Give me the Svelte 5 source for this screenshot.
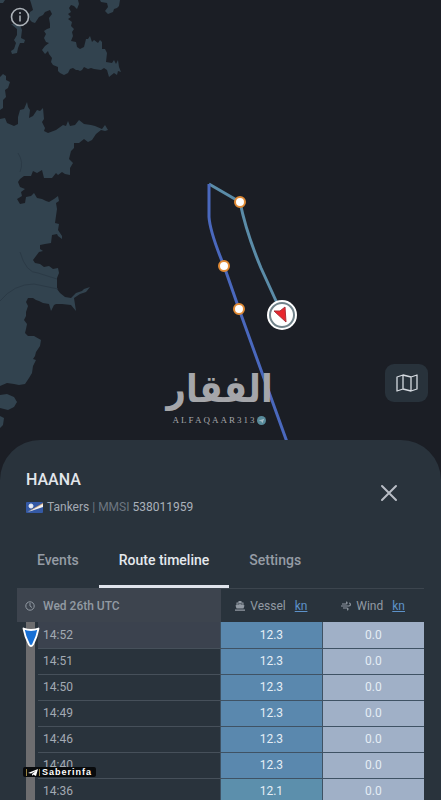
<script lang="ts">
	interface TrackRow {
		time: string;
		vessel: string;
		wind: string;
	}

	const rows: TrackRow[] = [
		{ time: '14:52', vessel: '12.3', wind: '0.0' },
		{ time: '14:51', vessel: '12.3', wind: '0.0' },
		{ time: '14:50', vessel: '12.3', wind: '0.0' },
		{ time: '14:49', vessel: '12.3', wind: '0.0' },
		{ time: '14:46', vessel: '12.3', wind: '0.0' },
		{ time: '14:40', vessel: '12.3', wind: '0.0' },
		{ time: '14:36', vessel: '12.1', wind: '0.0' }
	];

	const tabs = ['Events', 'Route timeline', 'Settings'];
	let activeTab = $state('Route timeline');
	let selected = $state(0);

	// Reported positions along the track
	const waypoints = [
		{ x: 240, y: 202 },
		{ x: 224, y: 266 },
		{ x: 239, y: 309 }
	];
</script>

<div class="app">
	<section class="map" aria-label="Map">
		<svg class="chart" viewBox="0 0 441 500" preserveAspectRatio="xMinYMin slice" aria-hidden="true">
			<g fill="#32434f">
				<path d="M30 0 78 0 79 4 77 9 74 6 71 5 69 8 71 12 68 14 71 17 68 19 72 22 71 26 74 29 72 32 73 36 71 41 76 42 77 47 80 49 84 47 86 39 88 39 90 36 92 42 94 40 98 43 100 40 102 42 102 49 105 49 107 53 106 62 112 63 114 60 116 64 118 60 119 67 121 72 118 71 117 75 114 73 109 77 107 70 104 68 101 70 94 69 91 68 88 69 84 67 82 70 80 71 78 70 76 70 73 68 70 69 68 73 64 75 60 73 58 71 58 67 53 65 51 62 52 58 49 54 48 51 45 54 42 50 45 46 49 43 46 42 44 38 46 34 44 31 47 29 50 28 50 24 49 18 52 14 50 10 45 12 43 15 39 17 37 20 35 23 32 22 30 20 29 15 30 12 33 10 31 3Z" />
				<path d="M11 24 20 25 22 30 21 38 25 40 24 43 20 43 18 48 17 53 12 54 11 51 14 49 16 43 14 40 17 35 17 29Z" />
				<path d="M0 0H5L3 3H0ZM100 0H120L119 6 117 8 114 9 113 12 108 14 105 11 108 7 107 3 101 2Z" />
				<path d="M0 77 3 74 6 76 6 80 10 82 8 88 5 90 6 97 3 100 3 108 0 110Z" />
				<path d="M0 119 5 118 7 123 14 126 18 124 18 117 20 110 24 109 27 102 28 107 30 110 29 118 33 116 37 110 40 111 43 108 44 119 42 122 45 128 44 131 48 133 56 130 63 125 66 126 68 121 70 126 75 125 79 120 84 124 91 125 95 126 102 129 105 125 108 130 105 131 101 130 96 134 92 140 88 142 84 139 79 143 74 143 74 148 71 151 69 159 73 163 70 168 70 175 65 174 62 172 58 175 56 173 52 178 44 178 42 170 37 173 33 171 31 176 24 176 20 179 18 182 20 187 25 189 21 192 22 196 17 199 20 204 25 203 26 197 31 196 34 193 37 198 42 199 46 201 49 202 54 199 58 196 59 201 56 203 57 209 56 216 55 223 59 224 58 230 62 236 62 239 58 236 57 234 52 235 51 243 45 244 40 245 40 249 43 251 39 252 36 256 33 260 35 263 40 264 44 267 49 266 53 269 58 268 59 273 57 278 57 289 60 293 65 297 71 298 76 293 82 291 84 289 90 287 86 292 80 294 74 298 76 311 71 305 62 304 56 304 54 305 51 311 49 304 43 303 39 301 36 300 33 298 28 298 26 302 28 306 26 312 26 316 24 320 27 324 26 329 25 333 28 336 34 336 41 340 40 346 36 352 35 356 33 359 36 360 33 366 32 373 29 378 25 384 19 385 14 384 7 383 0 386Z" />
				<path d="M0 395 7 394 14 397 17 402 14 407 8 410 0 408ZM0 416 4 418 3 425 0 428Z" />
			</g>
			<g fill="none" stroke="#2b3a46">
				<path d="M20 252Q26 273 38 273L57 279M0 301Q14 284 34 284L58 289M18 153Q24 162 20 172" />
			</g>
			<g fill="none" stroke-width="3" stroke-linejoin="round">
				<path d="M209 184 240 202Q246 232 261 268L282 314" stroke="#5b8ca8" />
				<path d="M209 184V217Q210 232 224 266L239 309 287 442" stroke="#4a68bd" />
			</g>
			{#each waypoints as point}
				<circle cx={point.x} cy={point.y} r="5" fill="#fff" stroke="#e08a35" stroke-width="2" />
			{/each}
			<circle cx="282" cy="315" r="15" fill="#fff" />
			<circle cx="282" cy="315" r="12" fill="none" stroke="#71838b" stroke-width="2" />
			<path d="M274 311 280 311 285 307 286 322Z" fill="#e8262d" stroke="#a93038" stroke-linejoin="round" />
		</svg>

		<div class="watermark">
			<span class="arabic" lang="ar" dir="rtl">الفقار</span>
			<span class="latin">
				ALFAQAAR313
				<svg viewBox="0 0 10 10" width="9" height="9" aria-hidden="true">
					<circle cx="5" cy="5" r="5" fill="#588b9b" />
					<path d="M2 5 8 3 6 8 5 6Z" fill="#a6bdc6" />
				</svg>
			</span>
		</div>

		<button class="info" aria-label="Information">
			<svg viewBox="0 0 20 20" width="20" height="20">
				<circle cx="10" cy="10" r="8.5" fill="none" stroke="currentColor" stroke-width="1.6" />
				<path d="M10 8.5V14.5" fill="none" stroke="currentColor" stroke-width="1.5" />
				<circle cx="10" cy="6" r="1" fill="currentColor" />
			</svg>
		</button>

		<button class="layers" aria-label="Map layers">
			<svg viewBox="0 0 24 20" width="24" height="20" fill="none" stroke="currentColor" stroke-width="1.3" stroke-linejoin="round">
				<path d="M2 4 8 2 16 4 22 2V16L16 18 8 16 2 18ZM8 2V16M16 4V18" />
			</svg>
		</button>
	</section>

	<section class="sheet">
		<header>
			<div>
				<h1>HAANA</h1>
				<p class="meta">
					<svg class="flag" viewBox="0 0 17 11" width="17" height="11" role="img" aria-label="Marshall Islands">
						<rect width="17" height="11" rx="1" fill="#3459a5" />
						<path d="M1 10 17 1V3Z" fill="#d5a671" />
						<path d="M2 10 17 2V5Z" fill="#f4f2ee" />
						<circle cx="5" cy="4" r="2" fill="#fff" />
						<path d="M5 1V7M2 4H8M3 2 7 6M7 2 3 6" stroke="#e5ebf5" stroke-width=".7" />
					</svg>
					<span>Tankers <span class="dim">| MMSI</span> <span class="mmsi">538011959</span></span>
				</p>
			</div>
			<button class="close" aria-label="Close">
				<svg viewBox="0 0 18 18" width="18" height="18">
					<path d="M2 2 16 16M16 2 2 16" stroke="currentColor" stroke-width="2" stroke-linecap="round" />
				</svg>
			</button>
		</header>

		<nav>
			{#each tabs as tab}
				<button class="tab" class:active={activeTab === tab} onclick={() => (activeTab = tab)}>{tab}</button>
			{/each}
		</nav>

		<table>
			<colgroup>
				<col class="rail-col" />
				<col />
				<col class="value-col" />
				<col class="value-col" />
			</colgroup>
			<thead>
				<tr>
					<th class="date" colspan="2">
						<div class="head">
							<svg viewBox="0 0 10 10" width="10" height="10" fill="none" stroke="currentColor">
								<circle cx="5" cy="5" r="4.2" />
								<path d="M5 2V5L7 6.5" />
							</svg>
							Wed 26th UTC
						</div>
					</th>
					<th>
						<div class="head unit">
							<svg viewBox="0 0 10 10" width="10" height="10" fill="currentColor">
								<path d="M3.5 0H6.5V1.5H8.5V4L9.5 4.5 8.5 7.5H1.5L.5 4.5 1.5 4V1.5H3.5ZM2.5 2.5V3.7L5 3 7.5 3.7V2.5ZM0 8.5H10V9.7H0Z" />
							</svg>
							Vessel <a href="#vessel-unit">kn</a>
						</div>
					</th>
					<th>
						<div class="head unit">
							<svg viewBox="0 0 10 10" width="10" height="10" fill="none" stroke="currentColor" stroke-width="1.2">
								<path d="M1 3H5Q6 3 6 2T5 1M0 5H8Q9.4 5 9.4 3.5T8 2M2 7H6Q7 7 7 8T6 9" />
							</svg>
							Wind <a href="#wind-unit">kn</a>
						</div>
					</th>
				</tr>
			</thead>
			<tbody>
				{#each rows as row, i}
					<tr class:selected={i === selected} onclick={() => (selected = i)}>
						<td class="rail">
							{#if i === selected}
								<svg class="marker" viewBox="0 0 18 22" width="18" height="22" aria-hidden="true">
									<path d="M1.5 2.5Q9 5.5 16.5 2.5 15 11 11 18.5 9 21.5 7 18.5 3 11 1.5 2.5Z" fill="#176fd4" stroke="#fff" stroke-width="1.8" stroke-linejoin="round" />
								</svg>
							{/if}
						</td>
						<td class="time">{row.time}</td>
						<td class="value vessel" class:slower={Number(row.vessel) < 12.2}>{row.vessel}</td>
						<td class="value wind">{row.wind}</td>
					</tr>
				{/each}
			</tbody>
		</table>
	</section>

	<div class="credit">
		<svg viewBox="0 0 14 9" width="14" height="9" aria-hidden="true">
			<path d="M.5 1V8M13.5 1V8" stroke="#9a8340" />
			<path d="M2 5 12 1 10 8 7 6.5 6 8V6L10 3 5 5.5Z" fill="#fff" />
		</svg>
		Saberinfa
	</div>
</div>

<style>
	:global(body) {
		margin: 0;
		background: #1b1e25;
	}

	.app {
		position: relative;
		display: flex;
		flex-direction: column;
		height: 100vh;
		overflow: hidden;
		background: #1b1e25;
		font-family: Roboto, "Liberation Sans", sans-serif;
		font-size: 12px;
		color: #a3aab3;
	}

	button {
		padding: 0;
		border: 0;
		background: none;
		color: inherit;
		font: inherit;
		cursor: pointer;
	}

	svg {
		display: block;
		flex: none;
	}

	.map {
		position: relative;
		flex: 0 0 55%;
	}

	.chart {
		position: absolute;
		top: 0;
		left: 0;
		width: 100%;
	}

	.info {
		position: absolute;
		top: 7px;
		left: 10px;
		color: #adb3b9;
	}

	.layers {
		position: absolute;
		right: 13px;
		bottom: 38px;
		display: grid;
		place-items: center;
		width: 43px;
		height: 38px;
		border-radius: 9px;
		background: #28323b;
		color: #d5dae0;
	}

	.watermark {
		position: absolute;
		bottom: 14px;
		left: 50%;
		display: flex;
		flex-direction: column;
		align-items: center;
		width: 110px;
		margin-left: -56px;
		color: #a5a6aa;
	}

	.arabic {
		font: bold 38px/50px "DejaVu Sans Condensed", "DejaVu Sans", sans-serif;
		white-space: nowrap;
	}

	.latin {
		display: flex;
		align-items: center;
		gap: 1px;
		font: 9px/12px "Liberation Serif", serif;
		letter-spacing: 2px;
	}

	.sheet {
		position: relative;
		flex: 1;
		min-height: 0;
		padding: 0 17px;
		border-radius: 40px 40px 0 0;
		background: #29333c;
	}

	header {
		display: flex;
		align-items: center;
		justify-content: space-between;
		padding: 29px 26px 0 9px;
	}

	h1 {
		margin: 0;
		font-size: 16px;
		font-weight: 500;
		line-height: 22px;
		color: #e2e6eb;
	}

	.meta {
		display: flex;
		align-items: center;
		gap: 4px;
		margin: 7px 0 0;
		line-height: 18px;
	}

	.dim {
		color: #6d7680;
	}

	.mmsi {
		color: #abb2bb;
	}

	.close {
		color: #b8bdc5;
	}

	nav {
		display: flex;
		margin-top: 19px;
		border-bottom: 1px solid #3c454e;
	}

	.tab {
		height: 53px;
		padding: 0 20px;
		border-bottom: 3px solid transparent;
		font-size: 14px;
		font-weight: 500;
		color: #959ca5;
	}

	.tab.active {
		border-color: #e0e4ec;
		color: #e5e9ee;
	}

	table {
		width: 100%;
		border-collapse: collapse;
		table-layout: fixed;
	}

	.rail-col {
		width: 21px;
	}

	.value-col {
		width: 25%;
	}

	th,
	td {
		box-sizing: border-box;
		padding: 0;
		font-weight: 400;
	}

	th {
		height: 33px;
	}

	.head {
		display: flex;
		align-items: center;
		gap: 8px;
		padding-left: 8px;
		color: #929aa3;
	}

	.date {
		background: #3d444e;
	}

	.date .head {
		font-weight: 500;
	}

	.unit {
		justify-content: center;
		gap: 5px;
		padding: 0;
	}

	.unit a {
		margin-left: 4px;
		color: #5d92c9;
	}

	td {
		height: 26px;
		border-bottom: 1px solid #46505a;
	}

	.rail {
		position: relative;
		border-bottom: 0;
		background: linear-gradient(#6d6d6f, #6d6d6f) 9px 0 / 9px 100% no-repeat;
	}

	.marker {
		position: absolute;
		top: 4px;
		left: 5px;
	}

	.time {
		padding-left: 5px;
	}

	.selected .time {
		background: #3b424e;
	}

	.value {
		border-left: 1px solid #3f5264;
		border-bottom-color: #3f5264;
		text-align: center;
		color: #e4edf5;
	}

	.vessel {
		background: #5a88ae;
	}

	.vessel.slower {
		background: #5c8fac;
	}

	.wind {
		background: #a0b0c7;
	}

	.credit {
		position: absolute;
		bottom: 23px;
		left: 23px;
		display: flex;
		align-items: center;
		gap: 2px;
		padding: 0 4px 0 3px;
		border-radius: 2px;
		background: #080a0c;
		font: bold 9px/10px "Liberation Sans", sans-serif;
		letter-spacing: 1px;
		color: #fff;
	}
</style>
